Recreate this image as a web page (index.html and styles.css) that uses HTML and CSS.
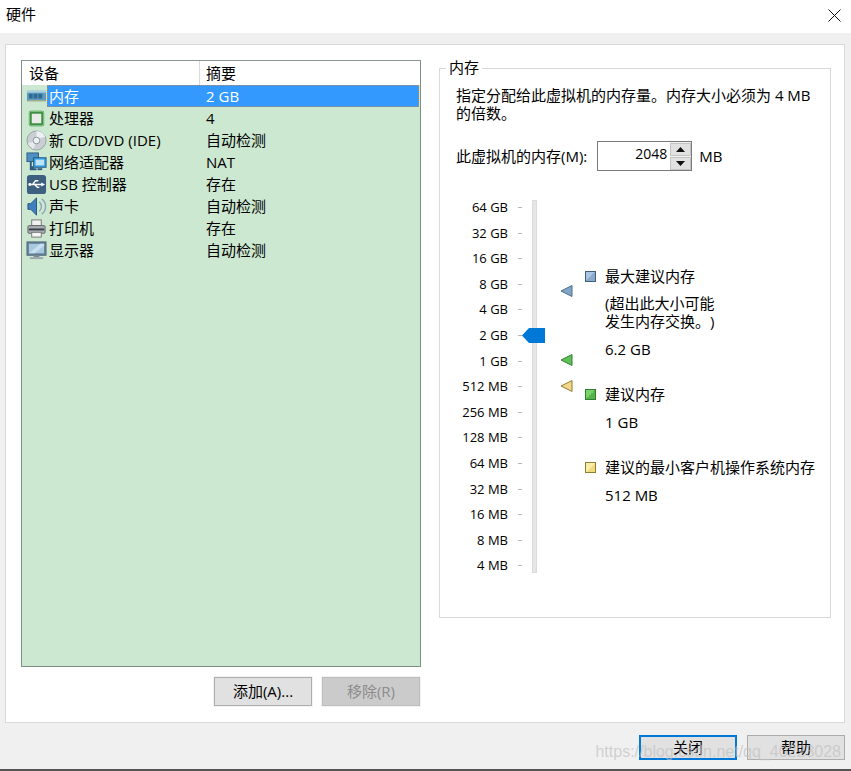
FILE: index.html
```html
<!DOCTYPE html>
<html lang="zh-CN">
<head>
<meta charset="utf-8">
<title>硬件</title>
<link rel="stylesheet" href="styles.css">
</head>
<body>
<div class="dialog">
  <header class="titlebar">
    <span>硬件</span>
    <svg class="close-x" width="13" height="13" viewBox="0 0 13 13"><path d="M.5.5l12 12M12.500.5l-12 12" stroke="#111" fill="none"/></svg>
  </header>
  <div class="body">
    <main class="panel">
      <section class="left">
        <div class="list">
          <div class="list-head">
            <div class="col-device">设备</div>
            <div class="col-summary">摘要</div>
          </div>
          <div class="row">
            <svg class="ico" width="22" height="22" viewBox="0 0 22 22"><rect x="1" y="5" width="20" height="11" fill="#5f9bc0"/><rect x="1" y="5" width="20" height="2" fill="#a9cfe3"/><path d="M3 8h4v5H3zM8 8h4v5H8zM13 8h4v5h-4z" fill="#2f6a92"/><path d="M2 15h18v1H2z" fill="#c9b769"/></svg>
            <div class="row-body selected"><span class="name">内存</span><span class="val">2 GB</span></div>
          </div>
          <div class="row">
            <svg class="ico" width="22" height="22" viewBox="0 0 22 22"><rect x="3" y="3" width="16" height="16" rx="2" fill="#3c8f43"/><rect x="3.500" y="3.500" width="15" height="15" rx="2" fill="none" stroke="#8fcb8f"/><rect x="6" y="6" width="10" height="10" fill="#e9ebe6"/></svg>
            <div class="row-body"><span class="name">处理器</span><span class="val">4</span></div>
          </div>
          <div class="row">
            <svg class="ico" width="22" height="22" viewBox="0 0 22 22"><circle cx="11" cy="11" r="10" fill="#c9cfd2" stroke="#9aa3a8"/><path d="M11 1a10 10 0 0 1 9 6l-6 2a3 3 0 0 0-3-1z" fill="#eef1f2"/><path d="M2 14a10 10 0 0 0 6 6l2-6a3 3 0 0 1-2-2z" fill="#e6eaec"/><circle cx="11" cy="11" r="3.500" fill="#eef2f3" stroke="#8b9499"/></svg>
            <div class="row-body"><span class="name">新 CD/DVD (IDE)</span><span class="val">自动检测</span></div>
          </div>
          <div class="row">
            <svg class="ico" width="22" height="22" viewBox="0 0 22 22"><rect x="1" y="1" width="12" height="9" fill="#4f8fc4" stroke="#2c5a80"/><path d="M5 10v6h3M4 18h7" stroke="#2c5a80" stroke-width="2" fill="none"/><rect x="8" y="6" width="13" height="10" fill="#3aa3e6" stroke="#26597f"/><rect x="10" y="8" width="9" height="6" fill="#bfe4f8"/><path d="M12 17h5v2h-5z" fill="#2c5a80"/></svg>
            <div class="row-body"><span class="name">网络适配器</span><span class="val">NAT</span></div>
          </div>
          <div class="row">
            <svg class="ico" width="22" height="22" viewBox="0 0 22 22"><rect x="1" y="1" width="20" height="20" rx="3" fill="#3d5f80"/><path d="M3 11h14M7 11l3-4h3M9 11l3 3h2" stroke="#fff" stroke-width="1.500" fill="none"/><path d="M16 9l4 2-4 2z" fill="#fff"/><circle cx="4" cy="11" r="1.500" fill="#fff"/></svg>
            <div class="row-body"><span class="name">USB 控制器</span><span class="val">存在</span></div>
          </div>
          <div class="row">
            <svg class="ico" width="22" height="22" viewBox="0 0 22 22"><path d="M2 8h3l6-6v18l-6-6H2z" fill="#3f7fc0" stroke="#28557f"/><path d="M14 6a7 7 0 0 1 0 10M16.500 3a10 10 0 0 1 0 16" stroke="#8fa6b8" stroke-width="1.500" fill="none"/></svg>
            <div class="row-body"><span class="name">声卡</span><span class="val">自动检测</span></div>
          </div>
          <div class="row">
            <svg class="ico" width="22" height="22" viewBox="0 0 22 22"><rect x="6" y="2" width="10" height="6" fill="#f2f2f2" stroke="#777"/><rect x="2" y="8" width="18" height="8" rx="1" fill="#a9b0b5" stroke="#666"/><rect x="3" y="11" width="16" height="2" fill="#3a4045"/><rect x="6" y="15" width="10" height="5" fill="#f5f5f5" stroke="#777"/></svg>
            <div class="row-body"><span class="name">打印机</span><span class="val">存在</span></div>
          </div>
          <div class="row">
            <svg class="ico" width="22" height="22" viewBox="0 0 22 22"><rect x="1" y="2" width="20" height="14" fill="#5f7f98" stroke="#5a6b78"/><rect x="3" y="4" width="16" height="10" fill="#a8c8df"/><path d="M3 14L15 4h4v2L9 14z" fill="#c7dfef"/><path d="M8 16h6v2H8z" fill="#7d8a94"/><path d="M4 18h14v2H4z" fill="#9aa6ae"/></svg>
            <div class="row-body"><span class="name">显示器</span><span class="val">自动检测</span></div>
          </div>
        </div>
        <div class="list-actions">
          <button class="btn" type="button">添加(A)...</button>
          <button class="btn btn-disabled" type="button">移除(R)</button>
        </div>
      </section>
      <fieldset class="group">
        <legend>内存</legend>
        <p class="desc">指定分配给此虚拟机的内存量。内存大小必须为 4 MB 的倍数。</p>
        <div class="mem-line">
          <label>此虚拟机的内存(M):</label>
          <div class="spin">
            <span class="spin-val">2048</span>
            <div class="spin-btns">
              <span class="spin-btn"><svg width="9" height="5" viewBox="0 0 9 5"><path d="M4.500 0l4.500 5H0z" fill="#111"/></svg></span>
              <span class="spin-btn"><svg width="9" height="5" viewBox="0 0 9 5"><path d="M0 0h9L4.500 5z" fill="#111"/></svg></span>
            </div>
          </div>
          <span class="unit">MB</span>
        </div>
        <div class="scale-area">
          <ul class="scale">
            <li>64 GB</li><li>32 GB</li><li>16 GB</li><li>8 GB</li><li>4 GB</li><li>2 GB</li><li>1 GB</li><li>512 MB</li><li>256 MB</li><li>128 MB</li><li>64 MB</li><li>32 MB</li><li>16 MB</li><li>8 MB</li><li>4 MB</li>
          </ul>
          <div class="track">
            <svg class="thumb" width="23" height="15" viewBox="0 0 23 15"><path d="M0 7.500L7 0h16v15H7z" fill="#0078d7"/></svg>
            <svg class="mark mark-max" width="12" height="12" viewBox="0 0 12 12"><path d="M0 6L11 .5v11z" fill="#7fa6c8" stroke="#4d6c88"/></svg>
            <svg class="mark mark-rec" width="12" height="12" viewBox="0 0 12 12"><path d="M0 6L11 .5v11z" fill="#62bf55" stroke="#2f7f33"/></svg>
            <svg class="mark mark-min" width="12" height="12" viewBox="0 0 12 12"><path d="M0 6L11 .5v11z" fill="#f2d98a" stroke="#8c7c35"/></svg>
          </div>
          <div class="legend-col">
            <div class="key key-max"><i class="swatch sw-blue"></i>最大建议内存</div>
            <p class="note">(超出此大小可能<br>发生内存交换。)</p>
            <p class="amount">6.2 GB</p>
            <div class="key key-rec"><i class="swatch sw-green"></i>建议内存</div>
            <p class="amount">1 GB</p>
            <div class="key key-min"><i class="swatch sw-yellow"></i>建议的最小客户机操作系统内存</div>
            <p class="amount">512 MB</p>
          </div>
        </div>
      </fieldset>
    </main>
    <footer class="footer">
      <button class="btn btn-default" type="button">关闭</button>
      <button class="btn" type="button">帮助</button>
    </footer>
  </div>
  <div class="watermark">https://blog.csdn.net/qq_40223028</div>
</div>
</body>
</html>
```
FILE: styles.css
```css
* { box-sizing: border-box; }
html, body { margin: 0; padding: 0; }
body {
  width: 851px;
  height: 771px;
  overflow: hidden;
  background: #fff;
  color: #000;
  font-family: "Open Sans", "Noto Sans CJK SC", sans-serif;
  font-size: 15px;
  line-height: 18px;
  text-spacing-trim: space-all;
}
.dialog {
  position: relative;
  width: 851px;
  height: 771px;
  display: flex;
  flex-direction: column;
  border-bottom: 2px solid #555;
}
.titlebar {
  height: 33px;
  flex: none;
  display: flex;
  align-items: center;
  justify-content: space-between;
  padding: 0 10px 6px 6px;
  background: #fff;
}
.close-x { margin-top: 3px; }
.body {
  flex: 1;
  background: #f0f0f0;
  padding: 11px 6px 0 5px;
  display: flex;
  flex-direction: column;
}
.panel {
  height: 679px;
  flex: none;
  background: #fff;
  border: 1px solid #d9d9d9;
  padding: 15px 13px 0 15px;
  display: flex;
  gap: 18px;
}
.left { width: 400px; flex: none; }
.list {
  height: 607px;
  border: 1px solid #7f8f88;
  background: #cde8d0;
  border-top-color: #8a9a93;
}
.list-head {
  height: 24px;
  background: #fff;
  display: flex;
  align-items: center;
}
.col-device { width: 178px; padding-left: 7px; border-right: 1px solid #d9d9d9; height: 24px; line-height: 24px; }
.col-summary { padding-left: 6px; }
.row { height: 22px; display: flex; align-items: center; padding-left: 4px; }
.ico { flex: none; width: 21px; height: 21px; }
.row-body {
  flex: 1;
  height: 22px;
  display: flex;
  align-items: center;
  margin-right: 1px;
  padding-left: 1px;
  border: 1px solid transparent;
}
.selected {
  background: #3399ff;
  color: #fff;
  border: 1px dotted #b98a5a;
}
.name { width: 157px; flex: none; }
.val { display: block; }
.list-actions {
  display: flex;
  justify-content: flex-end;
  gap: 10px;
  margin-top: 10px;
  padding-right: 1px;
}
.btn {
  width: 98px;
  height: 29px;
  padding: 0 0 2px;
  font: inherit;
  color: #000;
  background: #e1e1e1;
  border: 1px solid #adadad;
  box-shadow: 0 0 0 1px #f3f3f3;
}
.btn-disabled { background: #cbcbcb; color: #8c8c8c; border-color: #bdbdbd; }
.group {
  width: 392px;
  height: 561px;
  flex: none;
  margin: -3px 0 0;
  padding: 0 0 0 16px;
  border: 1px solid #d9d9d9;
  min-width: 0;
}
.group legend { padding: 0 3px 2px; margin-left: -10px; font-size: 15px; line-height: 20px; }
.desc { margin: 7px 8px 0 0; }
.mem-line { display: flex; align-items: center; margin-top: 19px; }
.spin {
  width: 95px;
  height: 30px;
  margin-left: 10px;
  border: 1px solid #7a7a7a;
  display: flex;
  justify-content: flex-end;
  background: #fff;
}
.spin-val { flex: 1; font-size: 14px; text-align: right; padding-right: 3px; line-height: 23px; }
.spin-btns { width: 21px; display: flex; flex-direction: column; gap: 1px; background: #f0f0f0; padding-top: 1px; }
.spin-btn {
  flex: 1;
  background: #e1e1e1;
  border: 1px solid #c4c4c4;
  display: flex;
  align-items: center;
  justify-content: center;
}
.unit { margin-left: 7px; }
.scale-area { display: flex; margin-top: 29px; }
.scale {
  list-style: none;
  margin: 0 0 0 -14px;
  padding: 0;
  width: 66px;
  flex: none;
}
.scale li {
  height: 25.6px;
  font-size: 13px;
  line-height: 15px;
  text-align: right;
  white-space: nowrap;
  position: relative;
}
.scale li::after {
  content: "";
  position: absolute;
  right: -14px;
  top: 7px;
  width: 4px;
  height: 1px;
  background: #b5b5b5;
}
.track {
  position: relative;
  width: 5px;
  height: 373px;
  margin-left: 24px;
  flex: none;
  background: #e6e6e6;
  border: 1px solid #d9dcdc;
}
.thumb { position: absolute; left: -11px; top: 127px; }
.mark { position: absolute; left: 28px; }
.mark-max { top: 84px; }
.mark-rec { top: 153px; }
.mark-min { top: 179px; }
.legend-col { margin-left: 48px; padding-top: 67px; flex: none; width: 240px; }
.key { position: relative; padding-left: 20px; white-space: nowrap; }
.swatch {
  position: absolute;
  left: 0;
  top: 4px;
  width: 11px;
  height: 11px;
  border: 1px solid;
}
.sw-blue { background: linear-gradient(135deg, #a9c6e4 50%, #8aa9cb 50%); border-color: #3f5f7f; }
.sw-green { background: linear-gradient(135deg, #7bd268 50%, #55b348 50%); border-color: #2f7f33; }
.sw-yellow { background: linear-gradient(135deg, #fbeeaa 50%, #f2da7e 50%); border-color: #8a8030; }
.note { margin: 9px 0 0 20px; }
.amount { margin: 10px 0 0 20px; }
.key-rec { margin-top: 27px; }
.key-min { margin-top: 27px; }
.footer {
  display: flex;
  justify-content: flex-end;
  gap: 10px;
  margin-top: 12px;
}
.footer .btn { height: 25px; box-shadow: none; }
.btn-default { border: 2px solid #0078d7; }
.watermark {
  position: absolute;
  right: 10px;
  top: 742px;
  font-family: "Liberation Sans", sans-serif;
  font-size: 16px;
  line-height: 20px;
  color: rgba(190, 190, 190, 0.65);
  white-space: nowrap;
}
```
